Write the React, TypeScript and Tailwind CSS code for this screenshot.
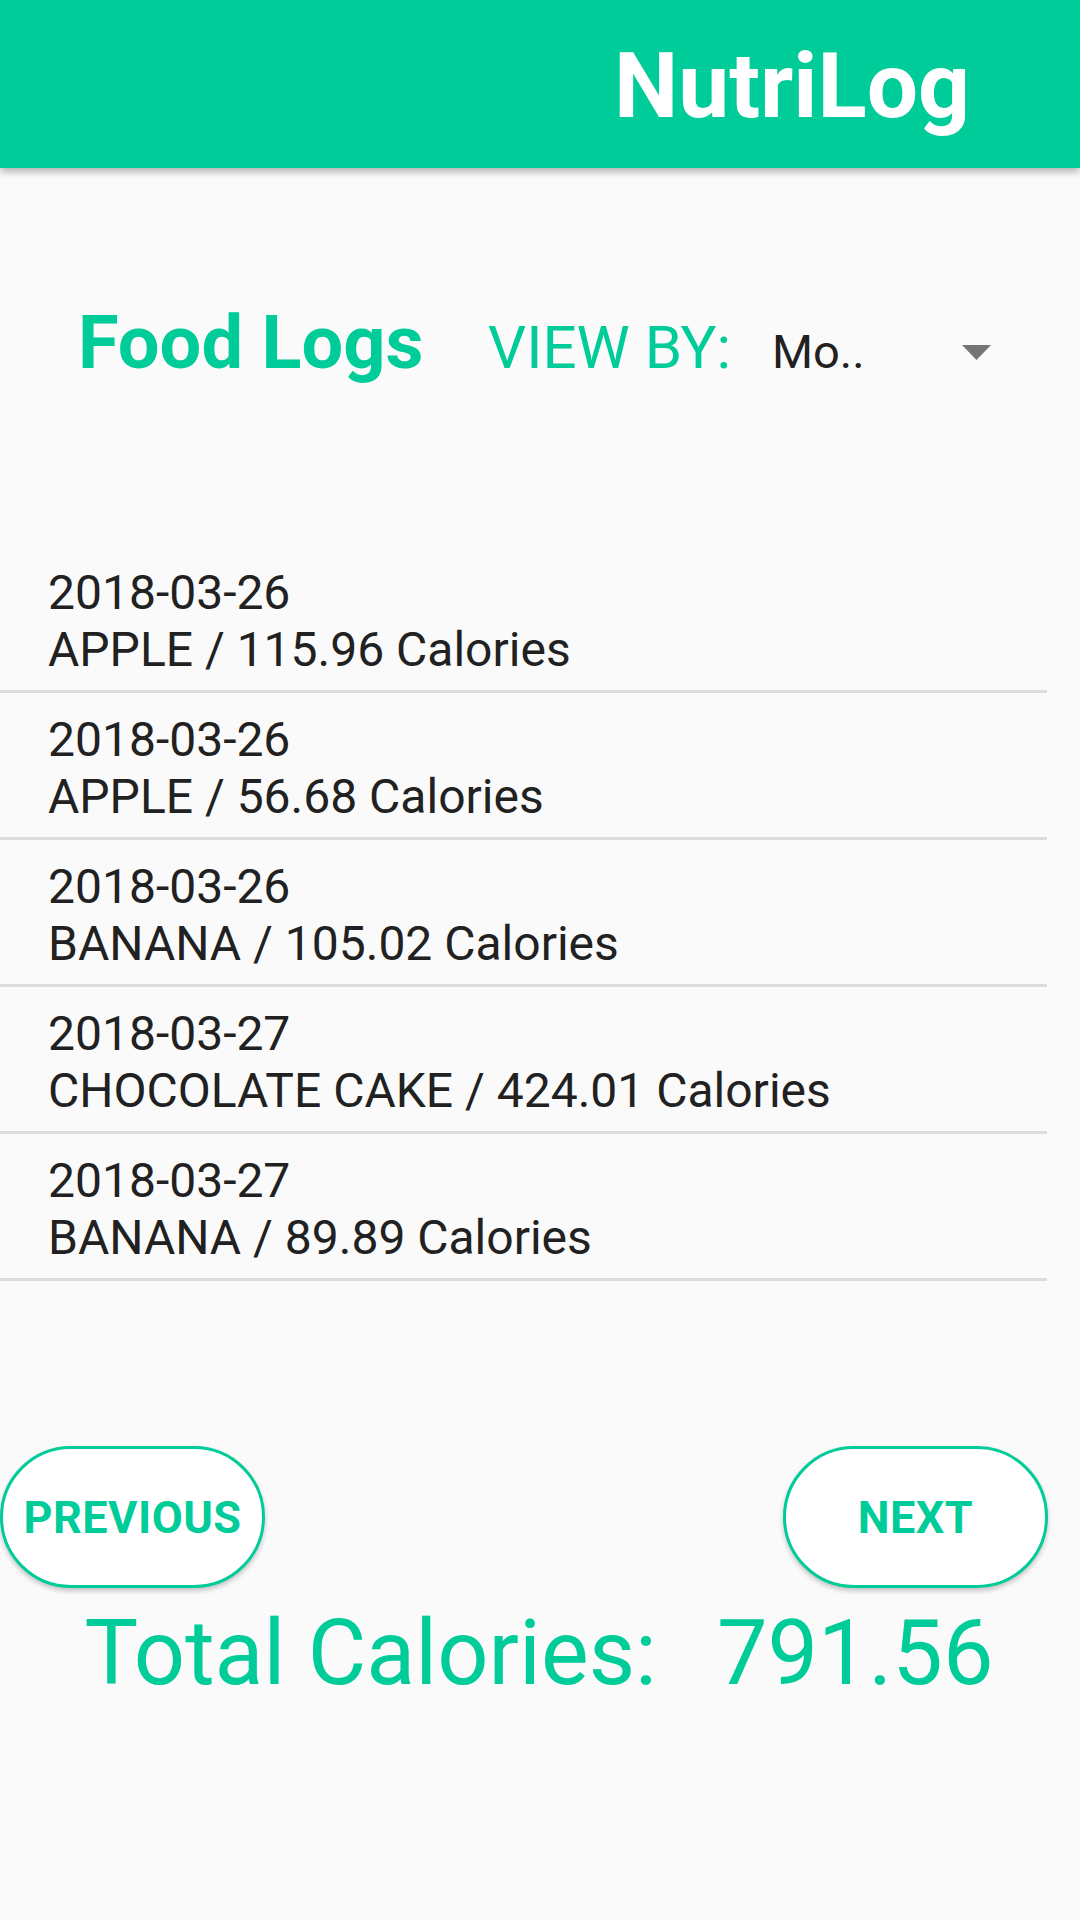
const GREEN = 'text-[#00cc99]';

const logs = [
  { date: '2018-03-26', food: 'APPLE', cal: '115.96' },
  { date: '2018-03-26', food: 'APPLE', cal: '56.68' },
  { date: '2018-03-26', food: 'BANANA', cal: '105.02' },
  { date: '2018-03-27', food: 'CHOCOLATE CAKE', cal: '424.01' },
  { date: '2018-03-27', food: 'BANANA', cal: '89.89' },
];

function PillButton({ label }: { label: string }) {
  return (
    <button className="w-[265px] h-[142px] rounded-full border-[3px] border-[#00cc99] bg-white shadow-[0_3px_5px_rgba(0,0,0,0.22)] flex items-center justify-center">
      <span className={`${GREEN} text-[45px] font-bold leading-none tracking-[0.5px]`}>{label}</span>
    </button>
  );
}

export default function App() {
  return (
    <div className="min-h-[1920px] w-[1080px] bg-[#fafafa] font-['Roboto',sans-serif] overflow-hidden">
      <header className="relative z-10 h-[168px] bg-[#00cc99] shadow-[0_4px_7px_rgba(0,0,0,0.28)] flex items-center justify-end pr-[110px] pt-[4px]">
        <h1 className="text-white text-[91px] font-bold leading-none">NutriLog</h1>
      </header>

      <div className="mt-[138px] h-[100px] flex items-baseline pl-[78px]">
        <h2 className={`${GREEN} w-[410px] text-[74px] font-bold leading-none`}>Food Logs</h2>
        <span className={`${GREEN} w-[284px] text-[60px] leading-none`}>VIEW BY:</span>
        <div className="w-[219px] flex items-center justify-between">
          <span className="text-[#212121] text-[47px] leading-none">Mo..</span>
          <svg width="29" height="15" viewBox="0 0 29 15" className="mt-[2px]">
            <polygon points="0,0 29,0 14.5,15" fill="#757575" />
          </svg>
        </div>
      </div>

      <ul className="mt-[140px] w-[1047px]">
        {logs.map((log, i) => (
          <li
            key={i}
            className="h-[147px] border-b-[3px] border-[#dcdcdc] pt-[18px] pl-[48px] text-[#212121] text-[48px] leading-[57px]"
          >
            <div>{log.date}</div>
            <div>
              {log.food} / {log.cal} Calories
            </div>
          </li>
        ))}
      </ul>

      <div className="mt-[165px] w-[1048px] flex justify-between">
        <PillButton label="PREVIOUS" />
        <PillButton label="NEXT" />
      </div>

      <div className={`${GREEN} mt-[21px] flex justify-center gap-[60px] text-[90px] leading-none pr-[2px]`}>
        <span>Total Calories:</span>
        <span>791.56</span>
      </div>
    </div>
  );
}
